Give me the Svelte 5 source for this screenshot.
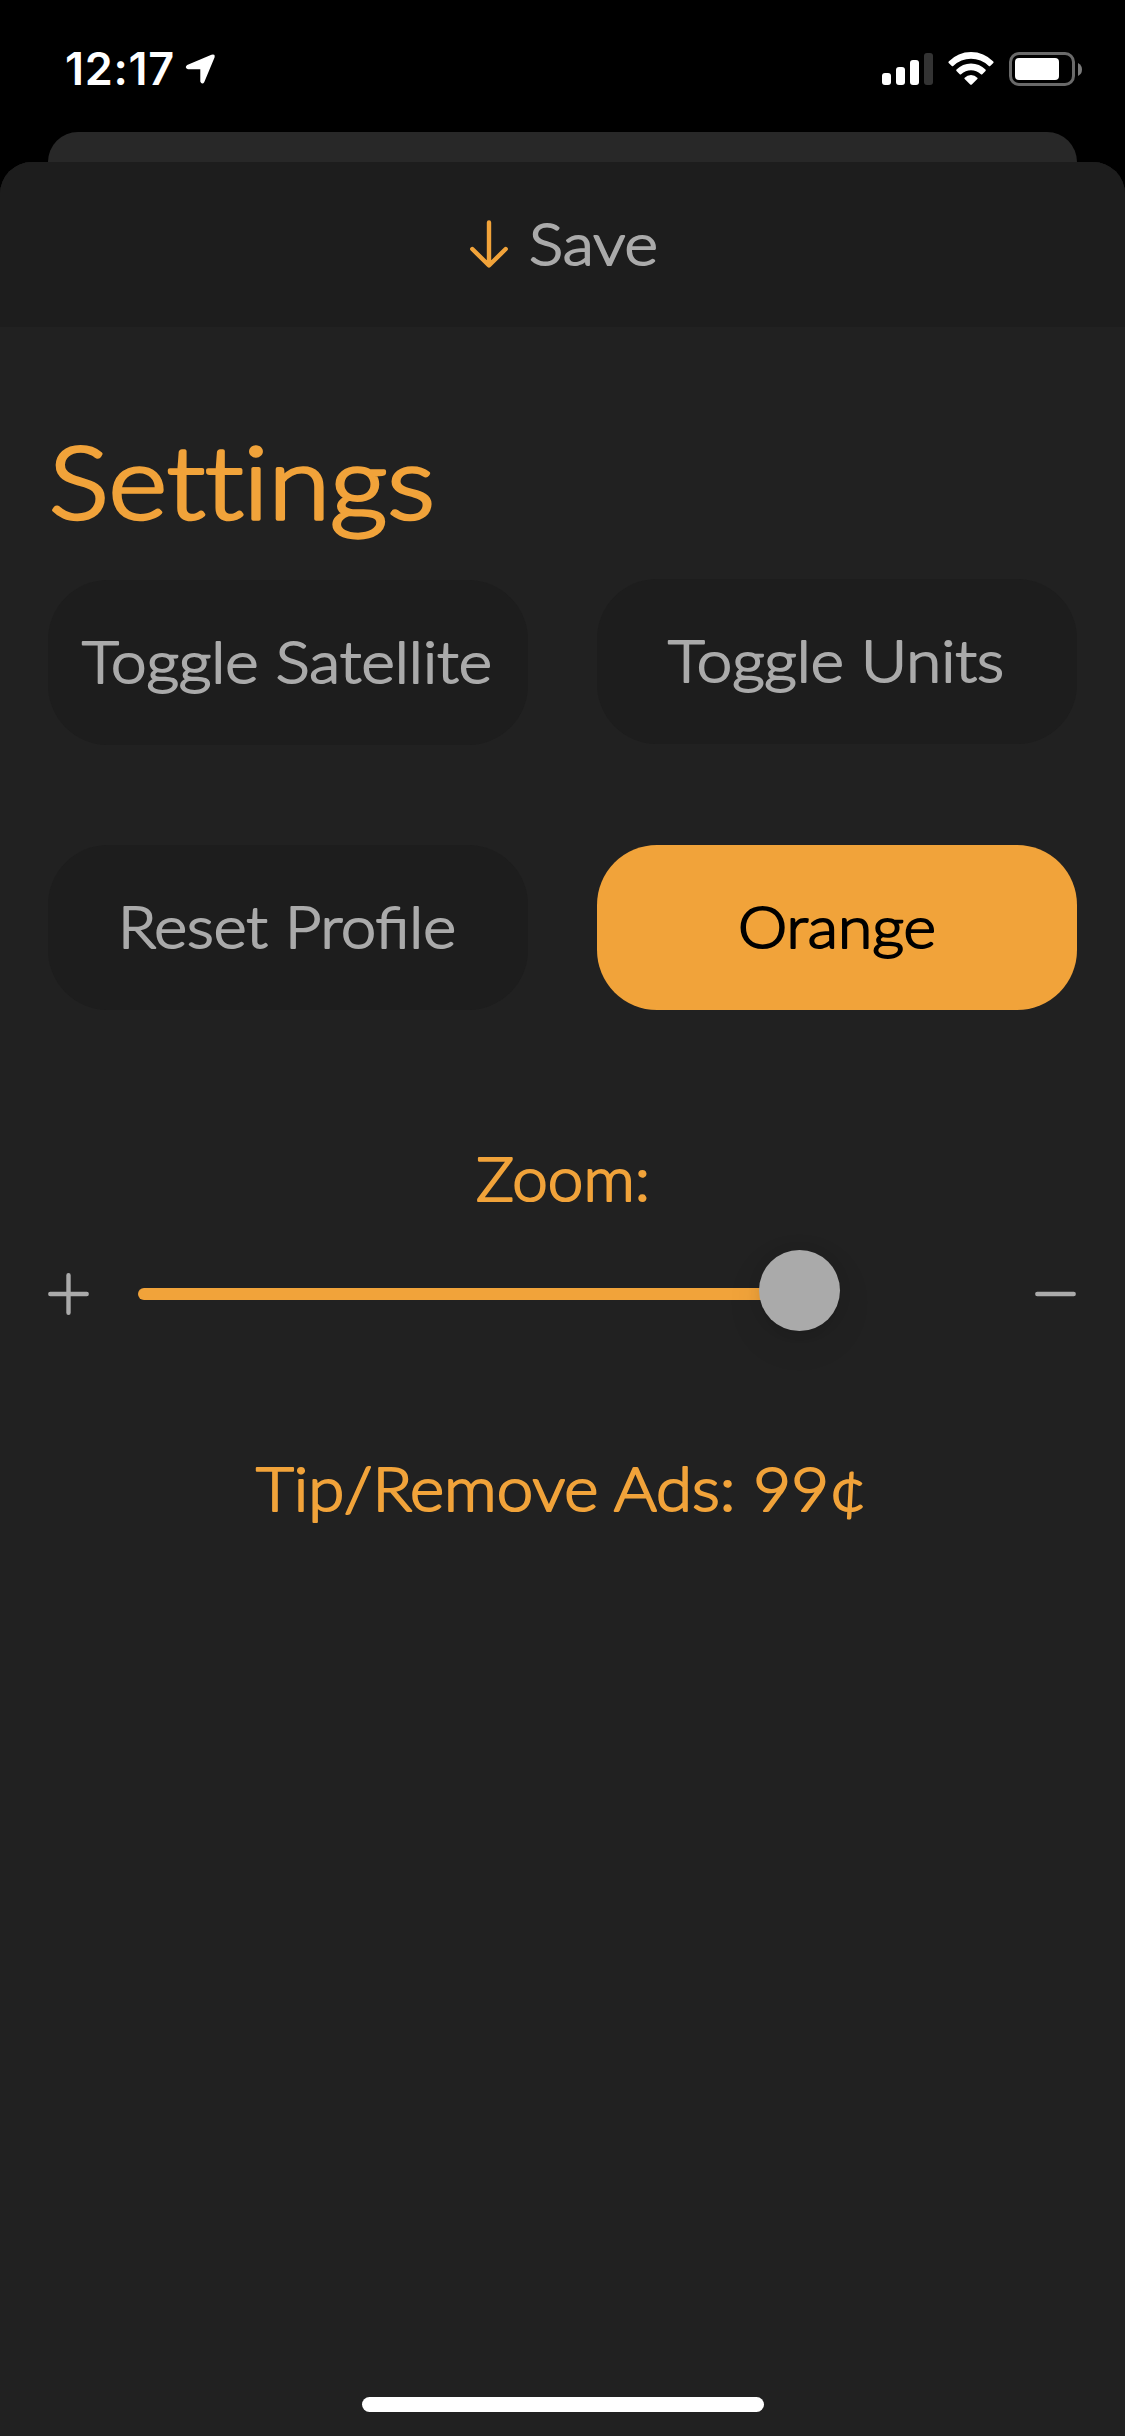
<script>
  // Label metrics: width is the advance of the whole line, size the font size.
  const options = [
    { text: 'Toggle Satellite', width: 410, name: 'satellite' },
    { text: 'Toggle Units', width: 336, name: 'units' },
    { text: 'Reset Profile', width: 338, name: 'reset' },
    { text: 'Orange', width: 198, name: 'accent' }
  ];
  const bars = [12, 18, 25, 32];
</script>

{#snippet label(text, width, size)}
  <svg class="label" {width} height={size} viewBox="0 0 {width} {size}" stroke-width={size * 0.035}>
    <text x="0" y={size * 0.85} font-size={size} textLength={width} lengthAdjust="spacingAndGlyphs">{text}</text>
  </svg>
{/snippet}

<div class="screen">
  <div class="status">
    <span class="time">12:17</span>
    <svg class="location" width="31" height="32" viewBox="0 0 31 32">
      <path d="M2.500 12.800 26.800 2.500Q29.400 1.700 28.700 4.200L18.600 28.500Q17.200 30.800 16.200 28.300V15.300H3.200Q.6 14.600 2.500 12.800Z" fill="#fff" stroke="#fff" stroke-width="1.800" stroke-linejoin="round" />
    </svg>
    <div class="signal">
      {#each bars as height, i}
        <i class:off={i === 3} style:height="{height}px"></i>
      {/each}
    </div>
    <svg class="wifi" width="46" height="33" viewBox="0 0 46 33">
      <path d="M.7 9.5Q10 0 23 0T45.300 9.500Q46 10.200 45.300 10.900L42.200 13.900Q41.500 14.500 40.800 13.900Q33 6.800 23 6.800T5.200 13.900Q4.500 14.500 3.800 13.900L.7 10.900Q0 10.200.7 9.500Z" />
      <path d="M8.500 17.600Q14.500 11.500 23 11.500T37.500 17.600Q38.200 18.300 37.500 19L34.300 22.200Q33.600 22.800 32.900 22.200Q28.500 18.300 23 18.300T13.100 22.200Q12.400 22.800 11.700 22.200L8.500 19Q7.800 18.300 8.500 17.600Z" />
      <path d="M16.700 25.700Q19.300 23 23 23T29.300 25.700Q29.900 26.400 29.300 27.100L23.800 32.400Q23 33.100 22.200 32.400L16.700 27.100Q16.100 26.400 16.700 25.700Z" />
    </svg>
    <div class="battery"><i></i></div>
    <svg class="tip" width="4" height="13" viewBox="0 0 4 13"><path d="M0 0Q4 2 4 6.500T0 13Z" fill="#7a7a7a" /></svg>
  </div>

  <div class="behind"></div>
  <main class="sheet">
    <header>
      <svg width="40" height="50" viewBox="0 0 40 50" fill="none" stroke="#f1a33a" stroke-width="4.400" stroke-linecap="round" stroke-linejoin="round">
        <path d="M20 3.500V46M3.300 30 20 46.500 36.700 30" />
      </svg>
      {@render label('Save', 129, 57.5)}
    </header>

    <section>
      <h1>{@render label('Settings', 386, 101)}</h1>
      <div class="options">
        {#each options as option}
          <button class={option.name}>{@render label(option.text, option.width, 57.5)}</button>
        {/each}
      </div>

      <h2>{@render label('Zoom:', 174, 60.5)}</h2>
      <div class="zoom">
        <svg width="42" height="44" viewBox="0 0 42 44"><path d="M2.300 22H38.700M20.500 3.200V40.800" /></svg>
        <div class="track"><div class="thumb"></div></div>
        <svg width="42" height="44" viewBox="0 0 42 44"><path d="M2.300 22H38.700" /></svg>
      </div>

      <div class="purchase">{@render label('Tip/Remove Ads: 99¢', 611, 60.5)}</div>
    </section>
    <div class="home"></div>
  </main>
</div>

<style>
  :global(body) { background: #000; }
  * { box-sizing: border-box; }
  .screen {
    width: 1125px;
    height: 2436px;
    overflow: hidden;
    display: flex;
    flex-direction: column;
    background: #000;
    color: #aaa;
    font-family: Lato, sans-serif;
  }
  .label {
    display: block;
    overflow: visible;
    fill: currentColor;
    stroke: currentColor;
    stroke-linejoin: round;
    font-family: Lato, sans-serif;
    font-weight: 300;
  }
  h1 .label, h1 { font-variant-ligatures: none; }
  .status {
    height: 132px;
    flex: none;
    display: flex;
    align-items: flex-start;
    padding: 52px 43px 0 65px;
    color: #fff;
  }
  .time {
    width: 120px;
    height: 34px;
    font: 600 45px/34px Inter, sans-serif;
    letter-spacing: 0.7px;
    white-space: nowrap;
  }
  .location { margin-top: 1px; }
  .signal {
    display: flex;
    align-items: flex-end;
    gap: 5px;
    height: 33px;
    margin: 0 15px 0 auto;
  }
  .signal i { width: 9px; border-radius: 3px; background: #fff; }
  .signal .off { background: #333; }
  .wifi { fill: #fff; margin-right: 15px; }
  .battery {
    width: 66px;
    height: 34px;
    padding: 3px;
    border: 3px solid #6a6a6a;
    border-radius: 10px;
  }
  .battery i { display: block; width: 44px; height: 22px; border-radius: 4px; background: #fff; }
  .tip { margin: 11px 0 0 3px; width: 4px; }
  .behind {
    flex: none;
    height: 30px;
    margin: 0 48px;
    border-radius: 30px 30px 0 0;
    background: #282828;
  }
  .sheet {
    flex: 1;
    display: flex;
    flex-direction: column;
    border-radius: 32px 32px 0 0;
    background: #212121;
    overflow: hidden;
  }
  header {
    height: 165px;
    flex: none;
    display: flex;
    padding: 57px 0 0 469px;
    gap: 20px;
    background: #1d1d1d;
  }
  header svg { flex: none; }
  header .label { margin-top: -3px; }
  section { flex: 1; padding: 0 48px; }
  h1 {
    margin: 0;
    height: 253px;
    padding: 106px 0 0 1px;
    color: #f1a33a;
  }
  .options {
    display: grid;
    grid-template-columns: 480px 480px;
    grid-template-rows: 165px 165px;
    gap: 100px 69px;
  }
  button {
    height: 165px;
    border: 0;
    border-radius: 60px;
    background: #1d1d1d;
    color: #aaa;
    display: flex;
    justify-content: center;
    padding: 54px 2px 0 0;
  }
  .units { margin-top: -1px; }
  .accent { background: #f1a33a; color: #000; padding-right: 0; }
  h2 {
    margin: 0;
    height: 262px;
    padding: 140px 0 0 428px;
    color: #f1a33a;
  }
  .zoom { display: flex; align-items: center; height: 44px; }
  .zoom svg { flex: none; fill: none; stroke: #aaa; stroke-width: 4.4; stroke-linecap: round; }
  .track {
    width: 680px;
    height: 12px;
    margin: 0 217px 0 48px;
    border-radius: 6px;
    background: #f1a33a;
    position: relative;
  }
  .thumb {
    position: absolute;
    left: 621px;
    top: -38px;
    width: 81px;
    height: 81px;
    border-radius: 50%;
    background: #aaa;
    box-shadow: 0 12px 38px rgba(0, 0, 0, 0.08), 0 2px 14px rgba(0, 0, 0, 0.08);
  }
  .purchase { padding: 144px 0 0 208px; color: #f1a33a; }
  .home {
    width: 402px;
    height: 15px;
    margin: 0 0 24px 362px;
    border-radius: 8px;
    background: #fff;
  }
</style>
